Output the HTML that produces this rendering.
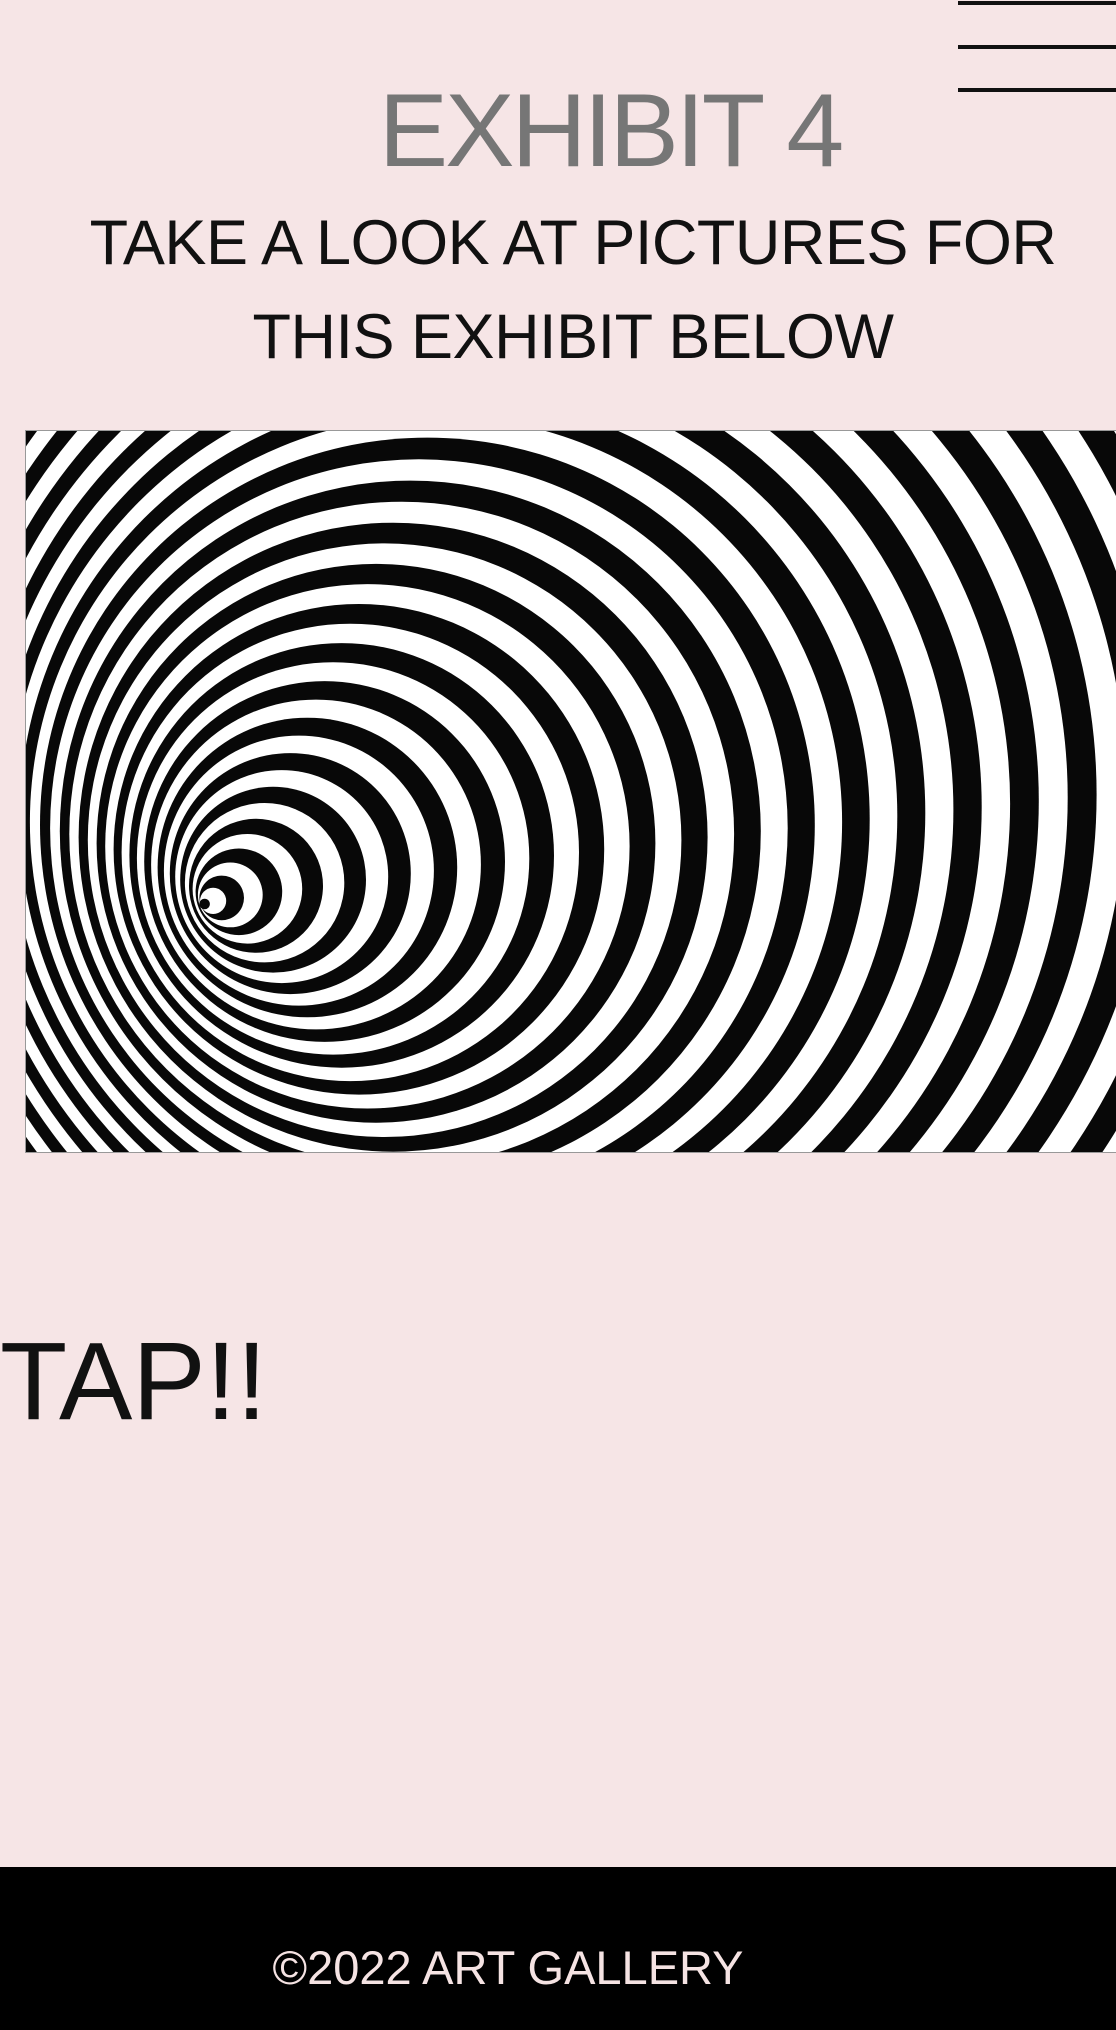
<!DOCTYPE html>
<html><head><meta charset="utf-8"><style>
html,body{margin:0;padding:0}
body{width:1116px;height:2030px;background:#f6e5e6;position:relative;overflow:hidden;font-family:"Liberation Sans",sans-serif}
.bar{position:absolute;left:958px;width:158px;height:4px;background:#111}
.t{position:absolute;white-space:nowrap}
</style></head><body>
<div class="bar" style="top:1px"></div>
<div class="bar" style="top:45px"></div>
<div class="bar" style="top:88px"></div>
<div class="t" style="left:0;width:1220px;text-align:center;top:72px;font-size:104px;color:#767676;letter-spacing:-3px">EXHIBIT 4</div>
<div class="t" style="left:0;width:1146px;text-align:center;top:196px;font-size:63px;line-height:94px;color:#111;letter-spacing:-0.5px">TAKE A LOOK AT PICTURES FOR<br>THIS EXHIBIT BELOW</div>
<svg id="sp" style="position:absolute;left:25px;top:430px;border:1px solid #999;background:#fff" width="1091" height="721" viewBox="0 0 1091 721"></svg>
<div class="t" style="left:0;top:1318px;font-size:110px;color:#111;letter-spacing:0px">TAP!!</div>
<div style="position:absolute;left:0;top:1867px;width:1116px;height:163px;background:#000"></div>
<div class="t" style="left:0;width:1016px;text-align:center;top:1940px;font-size:47px;color:#f5e3e3">©2022 ART GALLERY</div>
<script>
var s=document.getElementById('sp'),h='';
var N=56;
for(var k=N;k>=1;k--){var t=k/N;var r=1000*Math.pow(t,1.3);var cx=170+480*t;var cy=476-170*t;
h+='<circle cx="'+cx.toFixed(1)+'" cy="'+cy.toFixed(1)+'" r="'+r.toFixed(1)+'" fill="'+(k%2?'#080808':'#fff')+'"/>';}
s.innerHTML=h;
</script>
</body></html>
